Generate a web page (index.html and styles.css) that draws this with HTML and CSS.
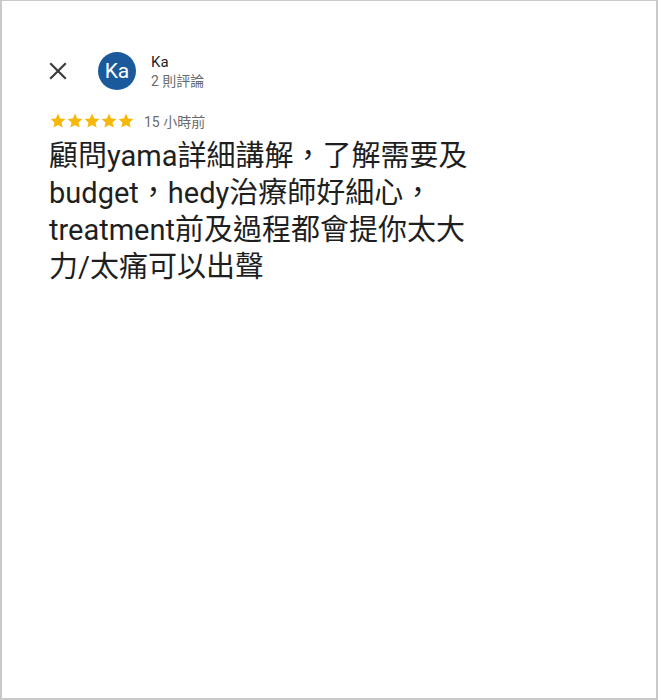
FILE: index.html
```html
<!DOCTYPE html>
<html lang="zh-Hant">
<head>
<meta charset="utf-8">
<link rel="stylesheet" href="styles.css">
</head>
<body>
<div class="frame">
  <div class="review">
    <div class="header">
      <button class="close" aria-label="關閉">
        <svg width="18" height="18" viewBox="0 0 18 18"><path d="M2 2 L16 16 M16 2 L2 16" stroke="#3c3c3c" stroke-width="2.2" stroke-linecap="square"/></svg>
      </button>
      <div class="avatar">Ka</div>
      <div class="who">
        <div class="name">Ka</div>
        <div class="count">2 則評論</div>
      </div>
    </div>
    <div class="meta">
      <div class="stars">
        <svg viewBox="0 0 84 16" width="84" height="16">
          <defs><path id="s" d="M8 0.6 L10.2 5.4 L15.4 5.9 L11.5 9.4 L12.6 14.6 L8 11.9 L3.4 14.6 L4.5 9.4 L0.6 5.9 L5.8 5.4 Z"/></defs>
          <use href="#s" x="0" fill="#f6b80b"/>
          <use href="#s" x="17" fill="#f6b80b"/>
          <use href="#s" x="34" fill="#f6b80b"/>
          <use href="#s" x="51" fill="#f6b80b"/>
          <use href="#s" x="68" fill="#f6b80b"/>
        </svg>
      </div>
      <span class="time">15 小時前</span>
    </div>
    <p class="text">顧問yama詳細講解，了解需要及budget，hedy治療師好細心，treatment前及過程都會提你太大力/太痛可以出聲</p>
  </div>
</div>
</body>
</html>
```

FILE: styles.css
```css
html, body {
  margin: 0;
  padding: 0;
  background: #ffffff;
}
.frame {
  box-sizing: border-box;
  width: 658px;
  height: 700px;
  border: 2px solid #c9c9c9;
  border-top-width: 1px;
  font-family: "Roboto", "Noto Sans CJK TC", sans-serif;
  color: #1f1f1f;
}
.review {
  padding: 50px 0 0 46px;
  width: 440px;
}
.header {
  display: flex;
  align-items: center;
  height: 40px;
}
.close {
  width: 20px;
  height: 20px;
  padding: 0;
  margin: 0;
  border: 0;
  background: none;
  display: flex;
  align-items: center;
  justify-content: center;
}
.avatar {
  width: 38px;
  height: 38px;
  border-radius: 50%;
  background: #1a5a9c;
  color: #fff;
  font-size: 21px;
  display: flex;
  align-items: center;
  justify-content: center;
  margin-left: 30px;
  margin-top: -1px;
}
.who {
  margin-left: 15px;
  display: flex;
  flex-direction: column;
  margin-top: 2px;
}
.name {
  font-size: 15px;
  line-height: 19px;
  color: #1f1f1f;
}
.count {
  font-size: 14px;
  line-height: 19px;
  color: #6b6b6b;
}
.meta {
  display: flex;
  align-items: center;
  margin-top: 21px;
  margin-left: 2px;
  height: 18px;
}
.stars {
  display: flex;
}
.stars svg {
  display: block;
}
.time {
  margin-left: 10px;
  font-size: 14px;
  color: #6b6b6b;
}
.text {
  margin: 8px 0 0 1px;
  font-size: 29px;
  line-height: 37px;
  color: #1f1f1f;
}
```
